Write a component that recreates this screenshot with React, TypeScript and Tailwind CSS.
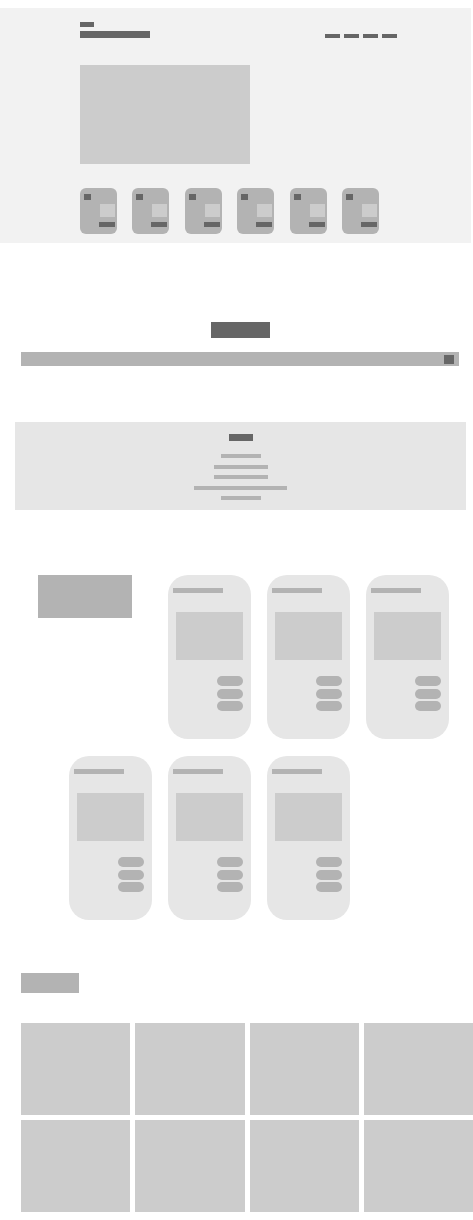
const thumbs = [0, 1, 2, 3, 4, 5];
const lines = ["w-[40px]", "w-[54px]", "w-[54px]", "w-[93px]", "w-[40px]"];
const tiles = [0, 1, 2, 3, 4, 5, 6, 7];

function Thumb() {
  return (
    <div className="w-[37px] h-[46px] rounded-[6px] bg-[#b3b3b3] flex flex-col pt-[6px] pl-[4px] pr-[2px]">
      <div className="w-[7px] h-[6px] bg-[#666666]" />
      <div className="self-end mt-[4px] w-[15px] h-[13px] bg-[#cccccc]" />
      <div className="self-end mt-[5px] w-[16px] h-[5px] bg-[#666666]" />
    </div>
  );
}

function PhoneCard() {
  return (
    <div className="w-[83px] h-[164px] rounded-[20px] bg-[#e6e6e6] flex flex-col pt-[13px] pl-[5px] pr-[8px]">
      <div className="w-[50px] h-[5px] bg-[#b3b3b3]" />
      <div className="mt-[19px] ml-[3px] w-[67px] h-[48px] bg-[#cccccc]" />
      <div className="self-end mt-[16px] flex flex-col gap-[2.5px]">
        <div className="w-[26px] h-[10px] rounded-full bg-[#b3b3b3]" />
        <div className="w-[26px] h-[10px] rounded-full bg-[#b3b3b3]" />
        <div className="w-[26px] h-[10px] rounded-full bg-[#b3b3b3]" />
      </div>
    </div>
  );
}

export default function App() {
  return (
    <div className="w-[473px] min-h-[1220px] bg-white overflow-hidden">
      {/* Header band */}
      <header className="mt-[8px] w-[471px] h-[235px] bg-[#f2f2f2] pt-[14px] pl-[80px] pr-[74px]">
        <div className="flex justify-between">
          <div className="flex flex-col">
            <div className="w-[14px] h-[5px] bg-[#666666]" />
            <div className="mt-[4px] w-[70px] h-[7px] bg-[#666666]" />
          </div>
          <nav className="mt-[12px] flex gap-[4px]">
            <div className="w-[15px] h-[4px] bg-[#666666]" />
            <div className="w-[15px] h-[4px] bg-[#666666]" />
            <div className="w-[15px] h-[4px] bg-[#666666]" />
            <div className="w-[15px] h-[4px] bg-[#666666]" />
          </nav>
        </div>
        <div className="mt-[27px] w-[170px] h-[99px] bg-[#cccccc]" />
        <div className="mt-[24px] flex gap-[15.4px]">
          {thumbs.map((t) => (
            <Thumb key={t} />
          ))}
        </div>
      </header>

      {/* Search */}
      <section className="pl-[21px] pt-[79px]">
        <div className="w-[438px] flex justify-center">
          <div className="w-[59px] h-[16px] bg-[#666666]" />
        </div>
        <div className="mt-[14px] w-[438px] h-[14px] bg-[#b3b3b3] flex items-center justify-end pr-[5px]">
          <div className="w-[10px] h-[9px] bg-[#666666]" />
        </div>
      </section>

      {/* Info panel */}
      <section className="mt-[56px] ml-[15px] w-[451px] h-[88px] bg-[#e6e6e6] flex flex-col items-center pt-[12px]">
        <div className="w-[24px] h-[7px] bg-[#666666]" />
        <div className="mt-[13px] flex flex-col items-center gap-[6.5px]">
          {lines.map((w, i) => (
            <div key={i} className={`${w} h-[4px] bg-[#b3b3b3]`} />
          ))}
        </div>
      </section>

      {/* Cards */}
      <section className="mt-[65px] flex flex-col gap-[17px]">
        <div className="flex pl-[38px]">
          <div className="w-[94px] h-[43px] bg-[#b3b3b3]" />
          <div className="ml-[36px] flex gap-[16px]">
            <PhoneCard />
            <PhoneCard />
            <PhoneCard />
          </div>
        </div>
        <div className="flex pl-[69px] gap-[16px]">
          <PhoneCard />
          <PhoneCard />
          <PhoneCard />
        </div>
      </section>

      {/* Gallery */}
      <section className="mt-[53px] pl-[21px]">
        <div className="w-[58px] h-[20px] bg-[#b3b3b3]" />
        <div className="mt-[30px] w-[452px] grid grid-cols-4 gap-[5px]">
          {tiles.map((t) => (
            <div key={t} className="h-[92px] bg-[#cccccc]" />
          ))}
        </div>
      </section>
    </div>
  );
}
